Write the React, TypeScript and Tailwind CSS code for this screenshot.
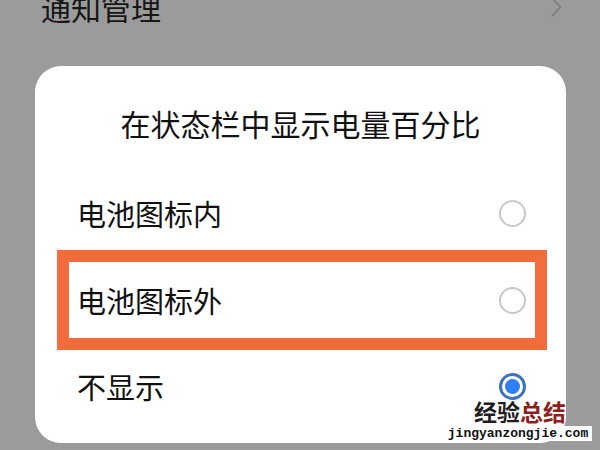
import React from "react";

const font = { fontFamily: '"Noto Sans CJK SC", "Noto Sans", sans-serif' };

function Radio({ checked }: { checked?: boolean }) {
  if (checked) {
    return (
      <span className="flex h-[27px] w-[27px] items-center justify-center rounded-full border-[3px] border-[#3f6fbf] bg-white">
        <span className="h-[15px] w-[15px] rounded-full bg-[#2f7ef3]" />
      </span>
    );
  }
  return <span className="h-[27px] w-[27px] rounded-full border-2 border-[#c8c8c8] bg-white" />;
}

export default function App() {
  return (
    <div
      className="relative flex h-[450px] w-[600px] flex-col overflow-hidden bg-[#9b9b9b]"
      style={font}
    >
      {/* list behind the dialog, scrolled partly out of view */}
      <div className="-mt-[11px] flex h-[36px] items-center justify-between pl-[41px] pr-[38px]">
        <span className="text-[30px] leading-[36px] text-[#161616]">通知管理</span>
        <svg width="12" height="22" viewBox="0 0 12 22" fill="none">
          <path d="M1.5 1.5 L10.5 11 L1.5 20.5" stroke="#7c7c7c" strokeWidth="1.6" />
        </svg>
      </div>

      {/* dialog */}
      <div className="ml-[35px] mt-[41px] flex h-[377px] w-[531px] flex-col rounded-[26px] bg-white">
        <div className="flex h-[110px] justify-center pt-[39px]">
          <span className="text-[30px] leading-[36px] text-[#111]">在状态栏中显示电量百分比</span>
        </div>

        <div className="flex h-[74px] items-center justify-between pl-[42px] pr-[40px]">
          <span className="text-[29px] leading-[36px] text-[#111]">电池图标内</span>
          <Radio />
        </div>

        <div className="ml-[22px] mr-[19px] flex h-[100px] items-center justify-between border-[12px] border-[#f26c3c] pl-[8px] pr-[9px]">
          <span className="text-[29px] leading-[36px] text-[#111]">电池图标外</span>
          <Radio />
        </div>

        <div className="flex h-[72px] items-center justify-between pl-[42px] pr-[40px]">
          <span className="text-[29px] leading-[36px] text-[#111]">不显示</span>
          <Radio checked />
        </div>
      </div>

      {/* watermark */}
      <div className="absolute left-[442px] top-[397px] flex w-[152px] flex-col items-center">
        <span className="pl-[4px] text-[23px] font-bold leading-[29px]">
          <span className="text-[#1e1e1e]">经验</span>
          <span className="text-[#8e1f1f]">总结</span>
        </span>
        <span
          className="bg-white px-[4px] text-[13px] font-bold leading-[15px] text-[#111]"
          style={{ fontFamily: '"Liberation Mono", monospace' }}
        >
          jingyanzongjie.com
        </span>
      </div>
    </div>
  );
}
